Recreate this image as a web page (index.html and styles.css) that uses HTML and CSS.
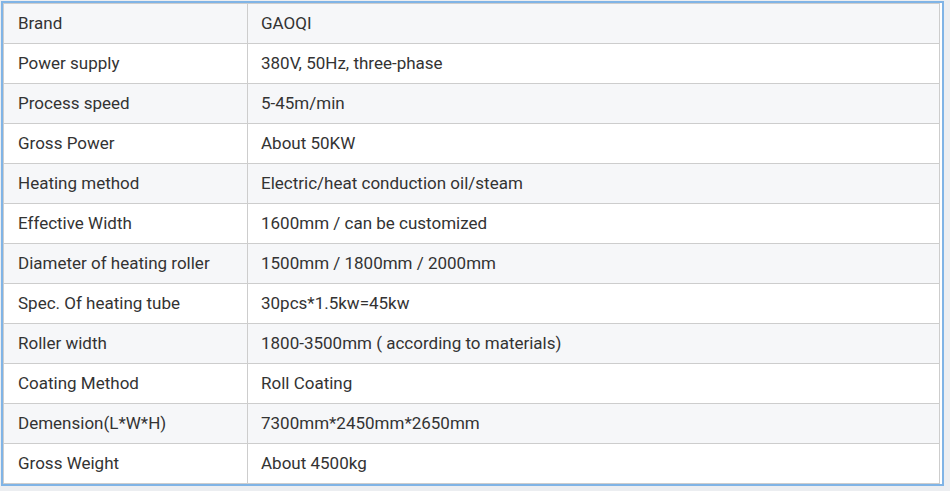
FILE: index.html
```html
<!DOCTYPE html>
<html lang="en">
<head>
<meta charset="utf-8">
<title>Specifications</title>
<link rel="stylesheet" href="styles.css">
</head>
<body>
<div class="frame">
  <table class="spec">
    <colgroup><col class="c1"><col class="c2"></colgroup>
    <tbody>
      <tr><td>Brand</td><td>GAOQI</td></tr>
      <tr><td>Power supply</td><td>380V, 50Hz, three-phase</td></tr>
      <tr><td>Process speed</td><td>5-45m/min</td></tr>
      <tr><td>Gross Power</td><td>About 50KW</td></tr>
      <tr><td>Heating method</td><td>Electric/heat conduction oil/steam</td></tr>
      <tr><td>Effective Width</td><td>1600mm / can be customized</td></tr>
      <tr><td>Diameter of heating roller</td><td>1500mm / 1800mm / 2000mm</td></tr>
      <tr><td>Spec. Of heating tube</td><td>30pcs*1.5kw=45kw</td></tr>
      <tr><td>Roller width</td><td>1800-3500mm ( according to materials)</td></tr>
      <tr><td>Coating Method</td><td>Roll Coating</td></tr>
      <tr><td>Demension(L*W*H)</td><td>7300mm*2450mm*2650mm</td></tr>
      <tr><td>Gross Weight</td><td>About 4500kg</td></tr>
    </tbody>
  </table>
</div>
</body>
</html>
```
FILE: styles.css
```css
html, body {
  margin: 0;
  padding: 0;
  background: #eceef1;
}
body {
  padding: 1px 0 0 1px;
  font-family: Roboto, "Liberation Sans", sans-serif;
}
.frame {
  border: 2px solid #80b4e6;
  background: #fff;
  padding: 0 3px 0 0;
  box-sizing: border-box;
  width: 943px;
}
.spec {
  border-collapse: collapse;
  width: 936px;
  table-layout: fixed;
}
.c1 { width: 244px; }
.c2 { width: 692px; }
.spec td {
  border: 1px solid #cdcdcd;
  height: 40px;
  padding: 0 14px 2px 14px;
  font-size: 17px;
  color: #333;
  vertical-align: middle;
  box-sizing: border-box;
}
.spec td + td {
  padding-left: 13px;
}
.spec tr:nth-child(odd) td {
  background: #f6f7f9;
}
.spec tr:nth-child(even) td {
  background: #fff;
}
```
